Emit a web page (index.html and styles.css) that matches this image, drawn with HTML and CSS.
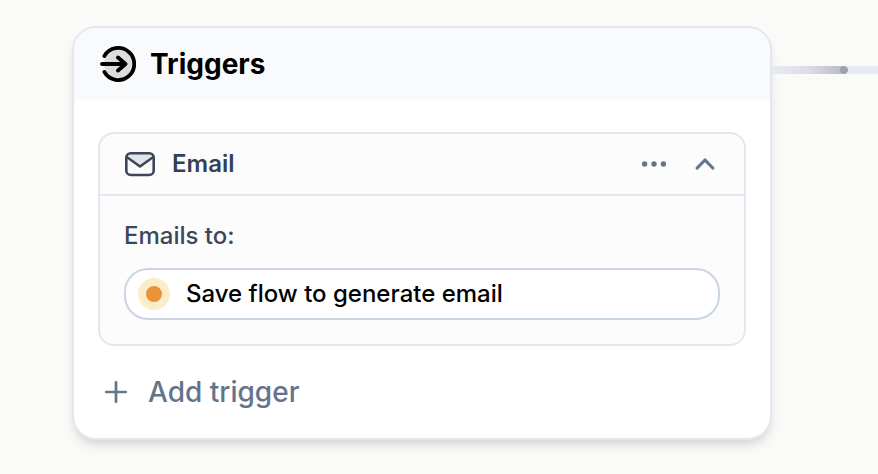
FILE: index.html
```html
<!DOCTYPE html>
<html lang="en">
<head>
<meta charset="utf-8">
<title>Triggers</title>
<link rel="stylesheet" href="styles.css">
</head>
<body>
<main class="canvas">
  <section class="card">
    <header class="card-header">
      <svg class="trigger-icon" width="36" height="36" viewBox="0 0 36 36" fill="none" stroke="#000" stroke-width="3.8" stroke-linecap="round" stroke-linejoin="round">
        <circle cx="18" cy="18" r="16" fill="#dcdddf" stroke="none"/>
        <path d="M0 12H5.500L3 18L5.500 24H0Z" fill="#f8fafc" stroke="none"/>
        <path d="M4.400 10A16 16 0 1 1 4.400 26M2 18H25.500M18 11.500L25.500 18L18 24.500"/>
      </svg>
      <h1 class="card-title">Triggers</h1>
    </header>
    <div class="card-body">
      <article class="panel">
        <header class="panel-header">
          <svg width="32" height="28" viewBox="0 0 32 28" fill="none" stroke="#3b475b" stroke-width="2.6" stroke-linecap="round" stroke-linejoin="round">
            <path d="M3 4L16 16L29 4L26 3H6Z" fill="#e2e4e8" stroke="none"/>
            <rect x="2.300" y="3.200" width="27.400" height="21.800" rx="4.500"/>
            <path d="M2.800 7L16 16.500L29.200 7"/>
          </svg>
          <h2 class="panel-title">Email</h2>
          <svg class="more" width="26" height="8" viewBox="0 0 26 8" fill="#64748b">
            <circle cx="3.600" cy="4" r="2.700"/><circle cx="13" cy="4" r="2.700"/><circle cx="22.400" cy="4" r="2.700"/>
          </svg>
          <svg class="chevron" width="20" height="14" viewBox="0 0 20 14" fill="none" stroke="#64748b" stroke-width="3.200" stroke-linecap="round" stroke-linejoin="round">
            <path d="M2.200 11L10 3L17.800 11"/>
          </svg>
        </header>
        <div class="panel-body">
          <p class="label">Emails to:</p>
          <div class="address">
            <span class="status"></span>
            <span class="address-text">Save flow to generate email</span>
          </div>
        </div>
      </article>
      <div class="add">
        <svg width="24" height="24" viewBox="0 0 24 24" fill="none" stroke="#64748b" stroke-width="2.700" stroke-linecap="round">
          <path d="M12 2.300V21.700M2.300 12H21.700"/>
        </svg>
        <span class="add-text">Add trigger</span>
      </div>
    </div>
  </section>
  <div class="connector"><span class="trail"></span></div>
</main>
</body>
</html>
```

FILE: styles.css
```css
* { box-sizing: border-box; }
body { margin: 0; background: #fafaf8; font-family: Inter, sans-serif; }
h1, h2, p { margin: 0; }
svg { display: block; flex: none; }
.canvas { display: flex; width: 878px; height: 474px; padding: 26px 0 0 72px; overflow: hidden; }
.card {
  flex: none;
  width: 700px;
  height: 414px;
  border: 2px solid #e2e8f0;
  border-radius: 24px;
  background: #fff;
  overflow: hidden;
  box-shadow: 0 8px 12px -2px rgba(0, 0, 0, .1), 0 4px 8px -4px rgba(0, 0, 0, .1);
}
.card-header { display: flex; align-items: center; height: 72px; padding-left: 26px; background: #f8fafc; }
.card-title { margin-left: 14px; font-size: 28px; line-height: 36px; font-weight: 650; color: #000; }
.card-body { padding: 32px 24px 0; }
.panel { height: 214px; border: 2px solid #e2e8f0; border-radius: 16px; background: #fcfcfc; }
.panel-header { display: flex; align-items: center; height: 62px; padding: 0 29px 0 24px; border-bottom: 2px solid #e2e8f0; }
.panel-title { margin-left: 16px; font-size: 24px; line-height: 32px; font-weight: 640; color: #334155; }
.more { margin-left: auto; }
.chevron { margin-left: 28px; }
.panel-body { padding: 24px 24px 0; }
.label { font-size: 24px; line-height: 32px; font-weight: 450; color: #3b475b; }
.address {
  display: flex;
  align-items: center;
  height: 52px;
  margin-top: 16px;
  padding-left: 12px;
  border: 2px solid #cbd5e1;
  border-radius: 24px;
  background: #fff;
}
.status { width: 32px; height: 32px; border: 8px solid #fbedc8; border-radius: 50%; background: #e89335; }
.address-text { margin-left: 16px; font-size: 24px; line-height: 32px; font-weight: 450; color: #000; }
.add { display: flex; align-items: center; margin-top: 26px; padding-left: 6px; color: #64748b; }
.add-text { margin-left: 20px; font-size: 28px; line-height: 40px; font-weight: 450; }
.connector { flex: 1; height: 8px; margin-top: 40px; background: #e8eaf2; }
.trail {
  display: block;
  width: 76px;
  height: 8px;
  background:
    radial-gradient(circle at 72px 4px, #9ca3af 3.700px, transparent 4.200px),
    linear-gradient(90deg, #e8eaf2, #dcdde5 50%, #b9bac3) 0 0 / 72px 8px no-repeat;
}
```
